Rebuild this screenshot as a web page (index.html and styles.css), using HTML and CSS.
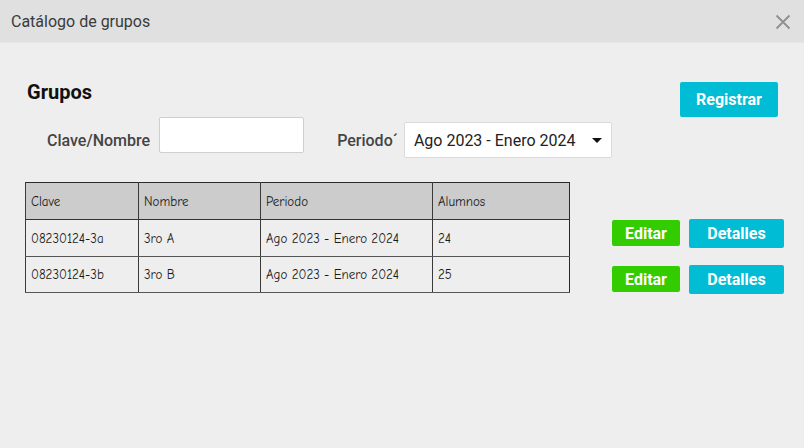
FILE: index.html
```html
<!DOCTYPE html>
<html lang="es">
<head>
<meta charset="utf-8">
<title>Catálogo de grupos</title>
<link rel="stylesheet" href="styles.css">
</head>
<body>
<div class="dialog">
  <header class="dialog-header">
    <span class="dialog-title">Catálogo de grupos</span>
    <svg class="close-icon" width="16" height="16" viewBox="0 0 16 16" aria-label="Cerrar">
      <path d="M1.5 1.5 L14.5 14.5 M14.5 1.5 L1.5 14.5" stroke="#8f8f8f" stroke-width="1.8" fill="none"/>
    </svg>
  </header>
  <main class="dialog-body">
    <div class="top">
      <div class="top-left">
        <h2 class="section-title">Grupos</h2>
        <div class="filters">
          <label class="filter-label">Clave/Nombre</label>
          <input class="text-input" type="text">
          <label class="filter-label periodo-label">Periodo´</label>
          <div class="select">
            <span>Ago 2023 - Enero 2024</span>
            <span class="caret"></span>
          </div>
        </div>
      </div>
      <button class="btn btn-cyan btn-register">Registrar</button>
    </div>
    <div class="grid-area">
      <table class="groups-table">
        <colgroup>
          <col class="c1"><col class="c2"><col class="c3"><col class="c4">
        </colgroup>
        <thead>
          <tr><th>Clave</th><th>Nombre</th><th>Periodo</th><th>Alumnos</th></tr>
        </thead>
        <tbody>
          <tr><td>08230124-3a</td><td>3ro A</td><td>Ago 2023 - Enero 2024</td><td>24</td></tr>
          <tr><td>08230124-3b</td><td>3ro B</td><td>Ago 2023 - Enero 2024</td><td>25</td></tr>
        </tbody>
      </table>
      <div class="actions">
        <div class="action-row">
          <button class="btn btn-green btn-edit">Editar</button>
          <button class="btn btn-cyan btn-details">Detalles</button>
        </div>
        <div class="action-row">
          <button class="btn btn-green btn-edit">Editar</button>
          <button class="btn btn-cyan btn-details">Detalles</button>
        </div>
      </div>
    </div>
  </main>
</div>
</body>
</html>
```

FILE: styles.css
```css
* { box-sizing: border-box; }

html, body {
  margin: 0;
  padding: 0;
  width: 804px;
  height: 448px;
  background: #eeeeee;
  font-family: Roboto, "Liberation Sans", sans-serif;
  overflow: hidden;
}

.dialog {
  width: 804px;
  height: 448px;
  background: #eeeeee;
}

.dialog-header {
  height: 43px;
  background: #e0e0e0;
  border-bottom: 1px solid #e6e6e6;
  display: flex;
  align-items: center;
  justify-content: space-between;
  padding: 0 13px 0 11px;
}

.dialog-title {
  font-size: 16px;
  color: #3a3a3a;
  margin-top: 1px;
}

.close-icon {
  display: block;
  width: 16px;
  height: 16px;
  margin-top: 1px;
}

.dialog-body {
  padding: 0 26px 0 25px;
}

.top {
  display: flex;
  justify-content: space-between;
  align-items: flex-start;
  padding-top: 38px;
}

.section-title {
  margin: 0 0 0 2px;
  font-size: 20px;
  font-weight: 700;
  color: #111;
  line-height: 22px;
}

.filters {
  display: flex;
  align-items: flex-end;
  margin-top: 14px;
  height: 41px;
  padding-left: 22px;
}

.filter-label {
  font-size: 16px;
  font-weight: 500;
  color: #444;
  line-height: 35px;
  height: 35px;
}

.text-input {
  align-self: flex-start;
  width: 145px;
  height: 36px;
  margin-left: 9px;
  border: 1px solid #cfcfcf;
  border-radius: 2px;
  background: #fff;
  outline: none;
}

.periodo-label {
  margin-left: 33px;
}

.select {
  width: 208px;
  height: 36px;
  margin-left: 6px;
  background: #fff;
  border: 1px solid #dadada;
  border-radius: 2px;
  display: flex;
  align-items: center;
  justify-content: space-between;
  padding: 0 9px 0 9px;
  font-size: 16px;
  color: #222;
}

.caret {
  width: 0;
  height: 0;
  border-left: 5px solid transparent;
  border-right: 5px solid transparent;
  border-top: 5px solid #111;
  margin-top: 1px;
}

.btn {
  border: none;
  border-radius: 2px;
  color: #fff;
  font-family: Roboto, "Liberation Sans", sans-serif;
  font-weight: 700;
  font-size: 16px;
  padding: 0;
  cursor: pointer;
}

.btn-cyan { background: #00bcd4; }
.btn-green { background: #33cc00; }

.btn-register {
  width: 98px;
  height: 35px;
  margin-top: 1px;
}

.grid-area {
  display: flex;
  align-items: flex-start;
  margin-top: 24px;
}

.groups-table {
  width: 544px;
  flex: 0 0 544px;
  table-layout: fixed;
  border-collapse: collapse;
  font-family: "Comic Neue", "Comic Sans MS", "Liberation Sans", sans-serif;
  font-size: 13px;
  color: #1a1a1a;
  border: 1.5px solid #2a2a2a;
}

.groups-table th,
.groups-table td {
  text-align: left;
  font-weight: 400;
  padding: 0 5px;
  border-left: 1.5px solid #3a3a3a;
  border-bottom: 1px solid #555;
  white-space: nowrap;
}

.groups-table thead tr {
  background: #cccccc;
  height: 37px;
}

.groups-table thead th {
  border-bottom: 1.5px solid #333;
}

.groups-table tbody tr {
  background: #eeeeee;
  height: 37px;
}

.groups-table tbody tr:last-child { height: 36px; }

.c1 { width: 113px; }
.c2 { width: 122px; }
.c3 { width: 172px; }
.c4 { width: 137px; }

.actions {
  margin-left: 42px;
  margin-top: 36px;
  display: flex;
  flex-direction: column;
  gap: 16px;
}

.action-row {
  display: flex;
  align-items: center;
  height: 30px;
  gap: 9px;
}

.btn-edit {
  width: 68px;
  height: 26px;
}

.btn-details {
  width: 95px;
  height: 29px;
}
```
